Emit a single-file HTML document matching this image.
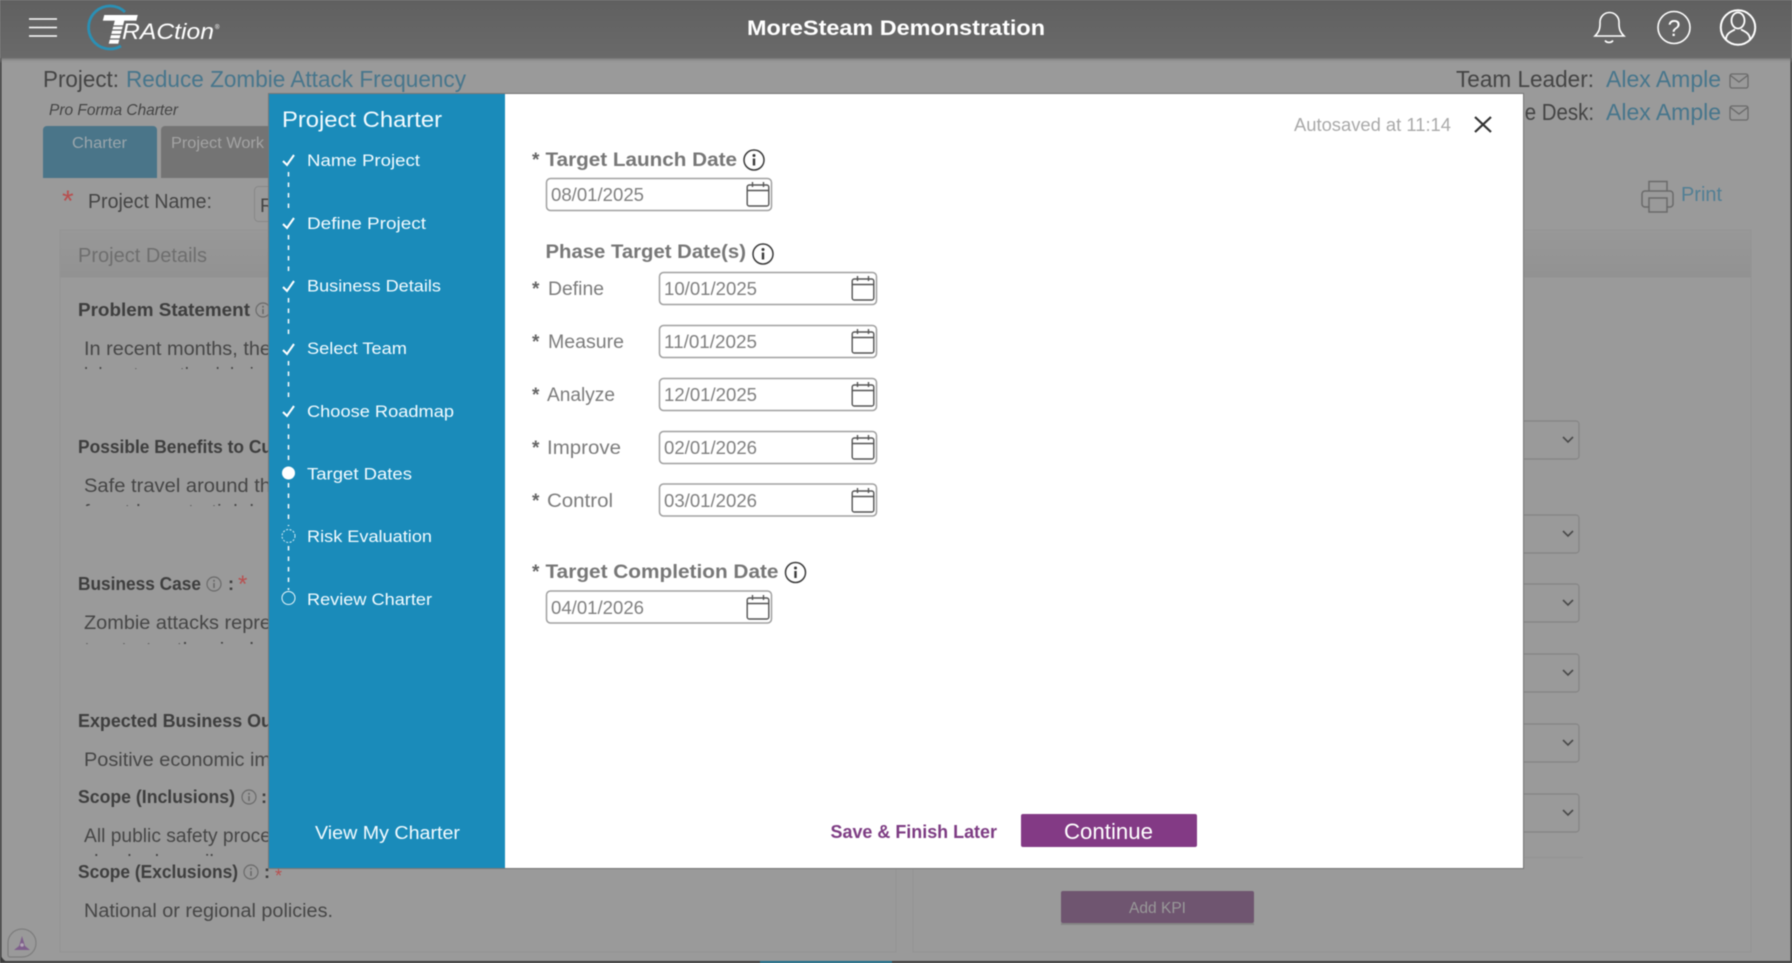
<!DOCTYPE html>
<html lang="en">
<head>
<meta charset="utf-8">
<title>Project Charter</title>
<style>
html,body{margin:0;padding:0;background:#9a9a9a;width:1792px;height:963px;overflow:hidden}
svg{display:block;filter:blur(.4px)}
text{font-family:"Liberation Sans",sans-serif;white-space:pre}
.d{fill:#444}
.b{fill:#3e3e3e;font-weight:700;font-size:18px}
.p{fill:#464646;font-size:19px}
.l{fill:#47768c;font-size:23px}
.w{fill:#f2fbff;font-size:17px}
.h{fill:#777;font-weight:700;font-size:19px}
.f{fill:#7c7c7c;font-size:19px}
.s{fill:#666;font-weight:700;font-size:19px}
.v{fill:#808080;font-size:18px}
.ic{fill:none;stroke:#6a6a6a;stroke-width:1.5}
</style>
</head>
<body>
<svg width="1792" height="963" viewBox="0 0 1792 963" xmlns="http://www.w3.org/2000/svg">
<defs>
<linearGradient id="hd" x1="0" y1="0" x2="0" y2="1"><stop offset="0" stop-color="#606060"/><stop offset="1" stop-color="#6a6a6a"/></linearGradient>
<linearGradient id="sh" x1="0" y1="0" x2="0" y2="1"><stop offset="0" stop-color="#666" stop-opacity=".7"/><stop offset="1" stop-color="#999" stop-opacity="0"/></linearGradient>
<linearGradient id="pb" x1="0" y1="0" x2="0" y2="1"><stop offset="0" stop-color="#989898"/><stop offset="1" stop-color="#929292"/></linearGradient>
<g id="cal" fill="none" stroke="#555" stroke-width="1.4"><rect x="0.7" y="3" width="21.6" height="21" rx="2"/><path d="M0.7 8.5H22.3M6 0V5M17 0V5"/></g>
<g id="inf"><circle cx="0" cy="0" r="10" fill="none" stroke="#3a3a3a" stroke-width="1.5"/><rect x="-1.2" y="-1.5" width="2.4" height="7" fill="#3a3a3a"/><circle cx="0" cy="-4.5" r="1.5" fill="#3a3a3a"/></g>
<g id="inf2"><circle cx="0" cy="0" r="7" fill="none" stroke="#6a6a6a" stroke-width="1.2"/><rect x="-.8" y="-1" width="1.6" height="5" fill="#6a6a6a"/><circle cx="0" cy="-3.2" r="1" fill="#6a6a6a"/></g>
<path id="chev" d="M-5 -3L0 2L5 -3" fill="none" stroke="#4a4a4a" stroke-width="1.6"/>
<path id="chk" d="M-5.5 1L-1.5 5L5.5 -5" fill="none" stroke="#fff" stroke-width="2"/>
<g id="env" fill="none" stroke="#6a6a6a" stroke-width="1.3"><rect x="0" y="0" width="18" height="14" rx="2"/><path d="M.5 1.5L9 8L17.500 1.500"/></g>
<clipPath id="cl1"><rect x="80" y="366" width="200" height="3"/></clipPath>
<clipPath id="cl2"><rect x="80" y="503" width="200" height="3"/></clipPath>
<clipPath id="cl3"><rect x="80" y="641" width="200" height="3"/></clipPath>
<clipPath id="cl4"><rect x="80" y="853" width="200" height="3"/></clipPath>
</defs>

<rect width="1792" height="963" fill="#9a9a9a"/>

<!-- panels -->
<rect x="60" y="230" width="836" height="722" fill="#9a9a9a" stroke="#939393"/>
<rect x="913" y="230" width="838" height="722" fill="#9a9a9a" stroke="#939393"/>
<rect x="60.500" y="230.500" width="835" height="47" fill="url(#pb)"/>
<rect x="913.500" y="230.500" width="837" height="47" fill="url(#pb)"/>
<text x="78" y="262" font-size="20" fill="#6e6e6e" textLength="129" lengthAdjust="spacingAndGlyphs">Project Details</text>

<!-- edges -->
<rect x="0" y="58" width="1.500" height="905" fill="#3a3a3a"/>
<rect x="1790.500" y="58" width="1.500" height="905" fill="#3a3a3a"/>
<rect x="0" y="961" width="1792" height="2" fill="#3c3c3c"/>
<path d="M0 951V963H12A12 12 0 0 1 0 951Z" fill="#3c3c3c"/>
<rect x="760" y="961" width="132" height="2" fill="#1f6f8c"/>

<!-- project row -->
<text x="43" y="87" font-size="23" class="d" textLength="76" lengthAdjust="spacingAndGlyphs">Project:</text>
<text x="126" y="87" class="l" textLength="340" lengthAdjust="spacingAndGlyphs">Reduce Zombie Attack Frequency</text>
<text x="49" y="115" font-size="16" font-style="italic" class="d" textLength="129" lengthAdjust="spacingAndGlyphs">Pro Forma Charter</text>
<text x="1456" y="87" font-size="23" class="d" textLength="138" lengthAdjust="spacingAndGlyphs">Team Leader:</text>
<text x="1606" y="87" class="l" textLength="115" lengthAdjust="spacingAndGlyphs">Alex Ample</text>
<use href="#env" x="1730" y="74"/>
<text x="1510" y="120" font-size="23" class="d" textLength="84" lengthAdjust="spacingAndGlyphs">ice Desk:</text>
<text x="1606" y="120" class="l" textLength="115" lengthAdjust="spacingAndGlyphs">Alex Ample</text>
<use href="#env" x="1730" y="106"/>

<!-- tabs -->
<path d="M43 178V130a4 4 0 0 1 4-4H153a4 4 0 0 1 4 4V178Z" fill="#4a7589"/>
<path d="M161 178V130a4 4 0 0 1 4-4H300V178Z" fill="#747474"/>
<text x="72" y="148" font-size="16" fill="#9aa6ac" textLength="55" lengthAdjust="spacingAndGlyphs">Charter</text>
<text x="171" y="148" font-size="16" fill="#a4a4a4" textLength="93" lengthAdjust="spacingAndGlyphs">Project Work</text>

<!-- project name -->
<text x="62" y="211" font-size="30" fill="#b85050">*</text>
<text x="88" y="208" font-size="20" class="d" textLength="124" lengthAdjust="spacingAndGlyphs">Project Name:</text>
<rect x="254.500" y="186.500" width="300" height="35" rx="4" fill="#9a9a9a" stroke="#878787"/>
<text x="260" y="212" font-size="19" class="d">R</text>

<!-- print -->
<g class="ic"><path d="M1649 191V181.500H1667V191"/><path d="M1649 207H1645a3 3 0 0 1-3-3V194a3 3 0 0 1 3-3H1670a3 3 0 0 1 3 3V204a3 3 0 0 1-3 3H1667"/><rect x="1649" y="198" width="18" height="14"/></g>
<text x="1681" y="201" font-size="20" fill="#527f94" textLength="41" lengthAdjust="spacingAndGlyphs">Print</text>

<!-- left text -->
<text x="78" y="316" class="b" textLength="172" lengthAdjust="spacingAndGlyphs">Problem Statement</text>
<use href="#inf2" x="263" y="310"/>
<text x="84" y="355" class="p" textLength="187" lengthAdjust="spacingAndGlyphs">In recent months, the</text>
<text x="84" y="381" class="p" clip-path="url(#cl1)" textLength="180" lengthAdjust="spacingAndGlyphs">l  l      t        th    l  l   i  </text>
<text x="78" y="453" class="b" textLength="194" lengthAdjust="spacingAndGlyphs">Possible Benefits to Cu</text>
<text x="84" y="492" class="p" textLength="187" lengthAdjust="spacingAndGlyphs">Safe travel around th</text>
<text x="84" y="518" class="p" clip-path="url(#cl2)" textLength="170" lengthAdjust="spacingAndGlyphs">f      t h       t   ti  l  l</text>
<text x="78" y="590" class="b" textLength="123" lengthAdjust="spacingAndGlyphs">Business Case</text>
<use href="#inf2" x="214" y="584"/>
<text x="228" y="590" class="b">:</text>
<text x="238" y="592" font-size="24" fill="#b85050">*</text>
<text x="84" y="629" class="p" textLength="187" lengthAdjust="spacingAndGlyphs">Zombie attacks repre</text>
<text x="84" y="656" class="p" clip-path="url(#cl3)" textLength="170" lengthAdjust="spacingAndGlyphs">t     t   t    th    i    l</text>
<text x="78" y="727" class="b" textLength="194" lengthAdjust="spacingAndGlyphs">Expected Business Ou</text>
<text x="84" y="766" class="p" textLength="187" lengthAdjust="spacingAndGlyphs">Positive economic im</text>
<text x="78" y="803" class="b" textLength="157" lengthAdjust="spacingAndGlyphs">Scope (Inclusions)</text>
<use href="#inf2" x="249" y="797"/>
<text x="261" y="803" class="b">:</text>
<text x="84" y="842" class="p" textLength="187" lengthAdjust="spacingAndGlyphs">All public safety proce</text>
<text x="94" y="868" class="p" clip-path="url(#cl4)" textLength="120" lengthAdjust="spacingAndGlyphs">l     l    l        il</text>
<text x="78" y="878" class="b" textLength="160" lengthAdjust="spacingAndGlyphs">Scope (Exclusions)</text>
<use href="#inf2" x="251" y="872"/>
<text x="264" y="878" class="b">:</text>
<text x="275" y="882" font-size="18" fill="#b85050">*</text>
<text x="84" y="917" class="p" textLength="249" lengthAdjust="spacingAndGlyphs">National or regional policies.</text>

<!-- wizard icon -->
<path d="M22 929a14 14 0 0 1 0 28H10a2 2 0 0 1-2-2V943a14 14 0 0 1 14-14Z" fill="none" stroke="#7d7d7d" stroke-width="1.200"/>
<path d="M22 936L25 946L30 950H14L19 946Z" fill="#7f5f8c"/>
<circle cx="22" cy="945" r="1.800" fill="#b4a8b8"/>

<!-- right dropdowns -->
<g fill="#9a9a9a" stroke="#858585" stroke-width="1.200">
<rect x="1400" y="421" width="179" height="38" rx="3"/>
<rect x="1400" y="515" width="179" height="38" rx="3"/>
<rect x="1400" y="584" width="179" height="38" rx="3"/>
<rect x="1400" y="654" width="179" height="38" rx="3"/>
<rect x="1400" y="724" width="179" height="38" rx="3"/>
<rect x="1400" y="794" width="179" height="38" rx="3"/>
</g>
<use href="#chev" x="1568" y="440"/>
<use href="#chev" x="1568" y="534"/>
<use href="#chev" x="1568" y="603"/>
<use href="#chev" x="1568" y="673"/>
<use href="#chev" x="1568" y="743"/>
<use href="#chev" x="1568" y="813"/>
<rect x="913" y="857" width="670" height="1" fill="#939393"/>

<!-- add KPI -->
<rect x="1061" y="891" width="193" height="32" rx="2" fill="#6f5570"/>
<rect x="1061" y="923" width="193" height="2" fill="#858585"/>
<text x="1129" y="913" font-size="16" fill="#999" textLength="57" lengthAdjust="spacingAndGlyphs">Add KPI</text>

<!-- header -->
<rect y="58" width="1792" height="5" fill="url(#sh)"/>
<rect width="1792" height="58" fill="url(#hd)"/>
<path d="M29 19H57M29 27.500H57M29 36H57" stroke="#fff" stroke-width="1.600" fill="none"/>
<path d="M125 12A21.500 21.500 0 1 0 121 46" fill="none" stroke="#2a90b5" stroke-width="2.800"/>
<text x="100" y="43" font-size="40" font-weight="700" font-style="italic" fill="#fff" stroke="#fff" stroke-width="1.200" textLength="33" lengthAdjust="spacingAndGlyphs">T</text>
<path d="M106 26H125M105 30H124M104 34.500H123M103 39H122" stroke="#666" stroke-width="1.300"/>
<text x="122" y="39" font-size="22" font-style="italic" fill="#fff" textLength="92" lengthAdjust="spacingAndGlyphs">RACtion</text>
<text x="215" y="29" font-size="6" fill="#fff">®</text>
<text x="747" y="35" font-size="21" font-weight="700" fill="#fff" textLength="298" lengthAdjust="spacingAndGlyphs">MoreSteam Demonstration</text>
<g fill="none" stroke="#fff" stroke-width="1.600">
<path d="M1595 36c3-3 5-6 5-12v-2a9.500 9.500 0 0 1 19 0v2c0 6 2 9 5 12Z"/>
<path d="M1605 40.500a4.500 3.500 0 0 0 8 0"/>
<circle cx="1674" cy="27.500" r="16"/>
<circle cx="1738" cy="27.500" r="17.200" stroke-width="2"/>
<ellipse cx="1738" cy="20.500" rx="6.500" ry="8" stroke-width="1.800"/>
<path d="M1726 39.500c0-6 5-8 9-10M1750 39.500c0-6-5-8-9-10" stroke-width="1.800"/>
</g>
<text x="1674" y="36" font-size="23" fill="#fff" text-anchor="middle">?</text>

<!-- modal -->
<rect x="268" y="93" width="1256" height="776" fill="#777"/>
<rect x="269" y="94" width="236" height="774" fill="#1a8bba"/>
<rect x="505" y="94" width="1018" height="774" fill="#fff"/>
<text x="282" y="127" font-size="22" fill="#f2fbff" textLength="160" lengthAdjust="spacingAndGlyphs">Project Charter</text>

<g stroke="#fff" stroke-width="1.500" stroke-dasharray="4.500 6" fill="none">
<path d="M288.500 172V214"/><path d="M288.500 235V277"/><path d="M288.500 298V340"/><path d="M288.500 361V403"/><path d="M288.500 424V464"/><path d="M288.500 483V526"/><path d="M288.500 546V590"/>
</g>
<use href="#chk" x="288.500" y="160"/>
<use href="#chk" x="288.500" y="223"/>
<use href="#chk" x="288.500" y="286"/>
<use href="#chk" x="288.500" y="349"/>
<use href="#chk" x="288.500" y="411"/>
<circle cx="288.500" cy="473" r="6.500" fill="#fff"/>
<circle cx="288.500" cy="536" r="6.500" fill="none" stroke="#d4eef8" stroke-width="1" stroke-dasharray="2 1.500"/>
<circle cx="288.500" cy="598" r="6.500" fill="none" stroke="#e6f6fb" stroke-width="1"/>

<text x="307" y="166" class="w" textLength="113" lengthAdjust="spacingAndGlyphs">Name Project</text>
<text x="307" y="229" class="w" textLength="119" lengthAdjust="spacingAndGlyphs">Define Project</text>
<text x="307" y="291.500" class="w" textLength="134" lengthAdjust="spacingAndGlyphs">Business Details</text>
<text x="307" y="354" class="w" textLength="100" lengthAdjust="spacingAndGlyphs">Select Team</text>
<text x="307" y="417" class="w" textLength="147" lengthAdjust="spacingAndGlyphs">Choose Roadmap</text>
<text x="307" y="479.500" class="w" textLength="105" lengthAdjust="spacingAndGlyphs">Target Dates</text>
<text x="307" y="542" class="w" textLength="125" lengthAdjust="spacingAndGlyphs">Risk Evaluation</text>
<text x="307" y="605" class="w" textLength="125" lengthAdjust="spacingAndGlyphs">Review Charter</text>
<text x="315" y="839" font-size="18" fill="#f2fbff" textLength="145" lengthAdjust="spacingAndGlyphs">View My Charter</text>

<!-- modal top right -->
<text x="1294" y="131" font-size="18" fill="#a9a9a9" textLength="157" lengthAdjust="spacingAndGlyphs">Autosaved at 11:14</text>
<path d="M1475 117L1491 132M1491 117L1475 132" stroke="#333" stroke-width="2.200" fill="none"/>

<!-- form -->
<text x="532" y="166" class="s">*</text>
<text x="545.500" y="166" class="h" textLength="191.500" lengthAdjust="spacingAndGlyphs">Target Launch Date</text>
<use href="#inf" x="754" y="160"/>
<rect x="546.500" y="178.500" width="225" height="32" rx="4" fill="#fff" stroke="#a0a0a0" stroke-width="1.500"/>
<text x="551" y="201" class="v" textLength="93" lengthAdjust="spacingAndGlyphs">08/01/2025</text>
<use href="#cal" x="746.500" y="182"/>

<text x="545.500" y="258" class="h" textLength="200.500" lengthAdjust="spacingAndGlyphs">Phase Target Date(s)</text>
<use href="#inf" x="763" y="254"/>

<g stroke="#a0a0a0" stroke-width="1.500" fill="#fff">
<rect x="659.500" y="272.500" width="217" height="32" rx="4"/>
<rect x="659.500" y="325.500" width="217" height="32" rx="4"/>
<rect x="659.500" y="378.500" width="217" height="32" rx="4"/>
<rect x="659.500" y="431.500" width="217" height="32" rx="4"/>
<rect x="659.500" y="484" width="217" height="32" rx="4"/>
</g>
<text x="532" y="295" class="s">*</text><text x="548" y="295" class="f" textLength="56" lengthAdjust="spacingAndGlyphs">Define</text>
<text x="532" y="348" class="s">*</text><text x="548" y="348" class="f" textLength="76" lengthAdjust="spacingAndGlyphs">Measure</text>
<text x="532" y="401" class="s">*</text><text x="547" y="401" class="f" textLength="68" lengthAdjust="spacingAndGlyphs">Analyze</text>
<text x="532" y="454" class="s">*</text><text x="547" y="454" class="f" textLength="74" lengthAdjust="spacingAndGlyphs">Improve</text>
<text x="532" y="507" class="s">*</text><text x="547" y="507" class="f" textLength="66" lengthAdjust="spacingAndGlyphs">Control</text>
<text x="664" y="295" class="v" textLength="93" lengthAdjust="spacingAndGlyphs">10/01/2025</text>
<text x="664" y="348" class="v" textLength="93" lengthAdjust="spacingAndGlyphs">11/01/2025</text>
<text x="664" y="401" class="v" textLength="93" lengthAdjust="spacingAndGlyphs">12/01/2025</text>
<text x="664" y="454" class="v" textLength="93" lengthAdjust="spacingAndGlyphs">02/01/2026</text>
<text x="664" y="507" class="v" textLength="93" lengthAdjust="spacingAndGlyphs">03/01/2026</text>
<use href="#cal" x="851.500" y="276"/>
<use href="#cal" x="851.500" y="329"/>
<use href="#cal" x="851.500" y="382"/>
<use href="#cal" x="851.500" y="435"/>
<use href="#cal" x="851.500" y="488"/>

<text x="532" y="578" class="s">*</text>
<text x="545.500" y="578" class="h" textLength="233" lengthAdjust="spacingAndGlyphs">Target Completion Date</text>
<use href="#inf" x="795.500" y="572.500"/>
<rect x="546.500" y="591" width="225" height="32" rx="4" fill="#fff" stroke="#a0a0a0" stroke-width="1.500"/>
<text x="551" y="614" class="v" textLength="93" lengthAdjust="spacingAndGlyphs">04/01/2026</text>
<use href="#cal" x="746.500" y="595"/>

<!-- buttons -->
<text x="830.500" y="838" font-size="18" font-weight="700" fill="#7d3c83" textLength="166.500" lengthAdjust="spacingAndGlyphs">Save &amp; Finish Later</text>
<rect x="1021" y="814" width="176" height="33" rx="2" fill="#833a85"/>
<text x="1064" y="839" font-size="22" fill="#fff" textLength="89" lengthAdjust="spacingAndGlyphs">Continue</text>
</svg>
</body>
</html>
